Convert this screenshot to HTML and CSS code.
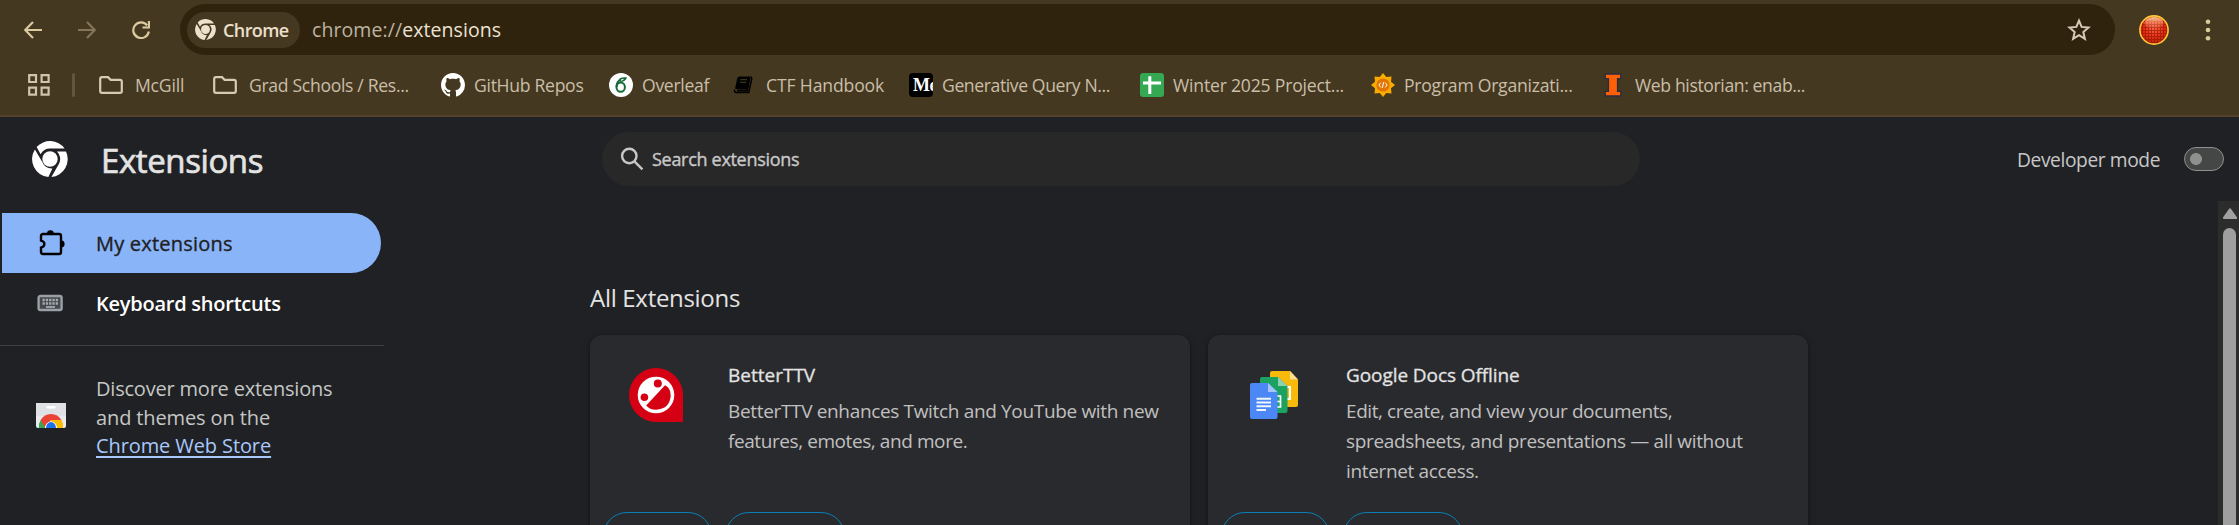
FILE: index.html
```html
<!DOCTYPE html>
<html lang="en">
<head>
<meta charset="utf-8">
<title>Extensions</title>
<link rel="stylesheet" href="styles.css">
</head>
<body>
<svg width="0" height="0" class="defs">
  <symbol id="chrome" viewBox="0 0 36 36">
    <circle cx="18" cy="18" r="7.7"/>
    <path d="M4.6 6A18 18 0 0 1 32.6 7.6H18A10.6 10.6 0 0 0 8.6 13.2Z"/>
    <path d="M2.9 8.4L10.3 21A9.6 9.6 0 0 0 20.4 27.4L16.4 36A18 18 0 0 1 2.9 8.4Z"/>
    <path d="M34 10.4A18 18 0 0 1 19.4 36L26.6 23.4A10.4 10.4 0 0 0 25 10.4Z"/>
  </symbol>
  <symbol id="folder" viewBox="0 0 24 18">
    <path d="M3 1.2H9L11.6 3.8H21Q22.8 3.8 22.8 5.6V15.2Q22.8 16.8 21 16.8H3Q1.2 16.8 1.2 15V3Q1.2 1.2 3 1.2Z" fill="none" stroke="#d6cbb4" stroke-width="2.2"/>
  </symbol>
</svg>

<header class="browser">
  <div class="toolbar">
    <svg class="nav" width="18" height="18" viewBox="0 0 18 18"><path d="M18 9H1.5M9 1L1.2 9L9 17"/></svg>
    <svg class="nav forward" width="18" height="18" viewBox="0 0 18 18"><path d="M0 9H16.5M9 1L16.8 9L9 17"/></svg>
    <svg class="nav reload" width="18" height="18" viewBox="0 0 18 18"><path d="M15.3 4.5A7.8 7.8 0 1 0 16.8 10.5M17 0V6.5H10.5"/></svg>
    <div class="omnibox">
      <div class="chip"><svg width="21" height="21"><use href="#chrome"/></svg><span class="t-chip">Chrome</span></div>
      <span class="url"><span class="scheme">chrome://</span>extensions</span>
      <svg class="star" width="24" height="24" viewBox="0 0 24 24"><path d="M12 2.6L14.6 8.9L21.5 9.5L16.3 14L17.9 20.8L12 17.2L6.1 20.8L7.7 14L2.5 9.5L9.4 8.9Z"/></svg>
    </div>
    <svg class="avatar" width="30" height="30" viewBox="0 0 30 30">
      <defs>
        <radialGradient id="ball" cx=".5" cy=".4" r=".6"><stop offset="0" stop-color="#ff6a4c"/><stop offset=".55" stop-color="#ec3216"/><stop offset="1" stop-color="#b82400"/></radialGradient>
        <linearGradient id="shine" x2="0" y2="1"><stop offset="0" stop-color="#ffdca0" stop-opacity=".9"/><stop offset="1" stop-color="#ff9070" stop-opacity="0"/></linearGradient>
        <pattern id="mesh" width="3" height="3" patternUnits="userSpaceOnUse"><path d="M0 .5H3M.5 0V3" stroke="#8a1200" stroke-width="1" opacity=".6"/></pattern>
      </defs>
      <circle cx="15" cy="15" r="14" fill="url(#ball)"/>
      <circle cx="15" cy="15" r="14" fill="url(#mesh)"/>
      <ellipse cx="15" cy="8" rx="9.5" ry="6" fill="url(#shine)"/>
      <circle cx="15" cy="15" r="14.1" fill="none" stroke="#ffc83c" stroke-width="1.6"/>
    </svg>
    <svg class="dots" width="6" height="24" viewBox="0 0 6 24"><circle cx="3" cy="3.7" r="2.3"/><circle cx="3" cy="12" r="2.3"/><circle cx="3" cy="20.3" r="2.3"/></svg>
  </div>
  <nav class="bookmarks">
    <svg class="apps" width="22" height="22" viewBox="0 0 22 22"><path d="M1.2 1.2H8V8H1.2ZM13.6 1.2H20.6V8H13.6ZM1.2 13.6H8V20.6H1.2ZM13.6 13.6H20.6V20.6H13.6Z"/></svg>
    <span class="sep"></span>
    <a class="bm b1"><svg width="24" height="18"><use href="#folder"/></svg><span>McGill</span></a>
    <a class="bm b2"><svg width="24" height="18"><use href="#folder"/></svg><span>Grad Schools / Res...</span></a>
    <a class="bm b3"><svg width="24" height="24" viewBox="0 0 16 16"><path fill="#fff" d="M8 0C3.58 0 0 3.58 0 8c0 3.54 2.29 6.53 5.47 7.59.4.07.55-.17.55-.38 0-.19-.01-.82-.01-1.49-2.01.37-2.53-.49-2.69-.94-.09-.23-.48-.94-.82-1.13-.28-.15-.68-.52-.01-.53.63-.01 1.08.58 1.23.82.72 1.21 1.87.87 2.33.66.07-.52.28-.87.51-1.07-1.78-.2-3.64-.89-3.64-3.95 0-.87.31-1.59.82-2.15-.08-.2-.36-1.02.08-2.12 0 0 .67-.21 2.2.82.64-.18 1.32-.27 2-.27s1.36.09 2 .27c1.53-1.04 2.2-.82 2.2-.82.44 1.1.16 1.92.08 2.12.51.56.82 1.27.82 2.15 0 3.07-1.87 3.75-3.65 3.95.29.25.54.73.54 1.48 0 1.07-.01 1.93-.01 2.2 0 .21.15.46.55.38A8.01 8.01 0 0 0 16 8c0-4.42-3.58-8-8-8z"/></svg><span>GitHub Repos</span></a>
    <a class="bm b4"><svg width="24" height="24" viewBox="0 0 24 24"><circle cx="12" cy="12" r="12" fill="#fff"/><g fill="none" stroke="#146b38"><ellipse cx="11.7" cy="14.2" rx="4.2" ry="4.6" stroke-width="2"/><path d="M7.5 14C7.5 10 9.3 7.6 12 6.6" stroke-width="2"/></g><path d="M9.5 7.8C10 4.5 14 4.2 18 4.4C17 8 13 9.3 10.5 8.8C12 8 14 7 15.5 5.8C13 6 10.8 6.8 9.5 7.8Z" fill="#146b38"/></svg><span>Overleaf</span></a>
    <a class="bm b5"><svg width="24" height="24" viewBox="0 0 24 24"><path d="M7.500 3.500H18L15 16H4.800Q3 16.500 3.200 15L5.300 5Q5.800 3.500 7.500 3.500Z"/><path d="M18.500 3.500L19.800 5.500L16.800 19.500H4.500Q2 19.500 2.500 16.500" fill="none" stroke="#000" stroke-width="1.500"/><path d="M17.500 5L15.200 17.500H5" fill="none" stroke="#000" stroke-width="1.800"/><path d="M8.500 6.700H15M8 9.300H14.300" stroke="#4a3f28" stroke-width="1"/></svg><span>CTF Handbook</span></a>
    <a class="bm b6"><svg width="24" height="24" viewBox="0 0 24 24"><rect width="24" height="24" rx="4"/><text x="4" y="18.3" fill="#fff" font-family="Liberation Serif, serif" font-weight="700" font-size="18" textLength="24">Me</text></svg><span>Generative Query N...</span></a>
    <a class="bm b7"><svg width="24" height="24" viewBox="0 0 24 24"><rect width="24" height="24" rx="3" fill="#34a853"/><path d="M9.8 3.2V21M3 10H21" stroke="#fff" stroke-width="3"/></svg><span>Winter 2025 Project...</span></a>
    <a class="bm b8"><svg width="24" height="24" viewBox="0 0 24 24"><path fill="#f9ab00" d="M12 0L15.3 4L20.5 3.5L20 8.700L24 12L20 15.300L20.5 20.5L15.300 20L12 24L8.700 20L3.5 20.5L4 15.300L0 12L4 8.700L3.5 3.5L8.700 4Z"/><circle cx="12" cy="12" r="6.600" fill="#e37400"/><path d="M9.8 9.600L7.8 12L9.8 14.400M14.2 9.600L16.2 12L14.2 14.400M12.8 9L11.2 15" fill="none" stroke="#fff" stroke-width="1"/></svg><span>Program Organizati...</span></a>
    <a class="bm b9"><svg width="18" height="24" viewBox="0 0 18 24"><path d="M1.2 1H16.8V5.6H13.6V18.4H16.8V23H1.2V18.4H4.4V5.6H1.2Z" fill="#ff5f05" stroke="#2b2c40" stroke-width="1.4"/></svg><span>Web historian: enab...</span></a>
  </nav>
</header>

<div class="page">
  <div class="head">
    <div class="brand"><svg width="36" height="36"><use href="#chrome"/></svg><h1>Extensions</h1></div>
    <div class="search"><svg width="24" height="24" viewBox="0 0 24 24"><circle cx="9.3" cy="9" r="7.2"/><path d="M14.4 14.4L22.4 22.4"/></svg><span>Search extensions</span></div>
    <div class="dev"><span>Developer mode</span><i class="toggle"></i></div>
  </div>
  <div class="body">
    <aside>
      <a class="item selected"><svg width="26" height="26" viewBox="0 0 26 26"><path d="M4 4H20Q22 4 22 6V22Q22 24 20 24H4Q2 24 2 22V17.6Q5.4 16.6 5.4 14Q5.4 11.4 2 10.6V6Q2 4 4 4Z" fill="none" stroke="#000" stroke-width="2.4"/><path d="M8 3.6A3.4 3.4 0 0 1 14.8 3.6ZM22.2 10.6A3.4 3.4 0 0 1 22.2 17.4Z"/></svg><span>My extensions</span></a>
      <a class="item"><svg width="26" height="18" viewBox="0 0 26 18"><rect x="1.6" y="2" width="23" height="14" rx="1.8" fill="#46494d" stroke="#9aa0a6" stroke-width="2.4"/><path d="M5.5 6H21M5.5 9.600H21" stroke="#a4a9ae" stroke-width="2.500" stroke-dasharray="2.300 1"/><path d="M9 13H18" stroke="#9aa0a6" stroke-width="2"/></svg><span class="kb">Keyboard shortcuts</span></a>
      <div class="promo">
        <svg width="30" height="26" viewBox="0 0 30 26"><path d="M0 0H30V23Q30 25 28 25H2Q0 25 0 23Z" fill="#e8eaed"/><path d="M0 0H30V13H0Z" fill="#dfe1e5"/><rect x="10.5" y="3" width="9" height="2.6" rx="1.3" fill="#fff"/><path d="M3 25A12 12 0 0 1 5 16.5L10 25Z" fill="#34a853"/><path d="M15 17H25.5A12 12 0 0 1 27 25H15Z" fill="#fbbc04"/><path d="M4.6 17A12 12 0 0 1 25.4 17H15L9.2 25Z" fill="#ea4335"/><path d="M9 25A6 6.500 0 0 1 21 25Z" fill="#fff"/><path d="M10 25A5 6 0 0 1 20 25Z" fill="#1a73e8"/></svg>
        <p><span class="p1">Discover more extensions</span><span class="p2">and themes on the</span><a class="p3">Chrome Web Store</a></p>
      </div>
    </aside>
    <main>
      <h2><span>All Extensions</span></h2>
      <div class="cards">
        <section class="card">
          <div class="info">
            <svg class="logo" width="54" height="54" viewBox="0 0 54 54"><path d="M27 0A27 27 0 0 1 54 27V54H27A27 27 0 0 1 27 0Z" fill="#d50014"/><circle cx="27" cy="27" r="18.3" fill="#fff"/><path d="M36 17.2Q42 20 41.7 28Q40.5 41 27 41.7Q20.5 41.5 17.2 37.4Z" fill="#d50014"/><circle cx="28.8" cy="15.6" r="4" fill="#d50014"/><circle cx="15.4" cy="29.2" r="3.8" fill="#d50014"/></svg>
            <div><h3 class="c1">BetterTTV</h3><p><span class="d1">BetterTTV enhances Twitch and YouTube with new</span><span class="d2">features, emotes, and more.</span></p></div>
          </div>
          <div class="buttons"><i></i><i></i></div>
        </section>
        <section class="card">
          <div class="info">
            <svg class="logo" width="54" height="54" viewBox="0 0 54 54">
              <path d="M25 3H43L51 11.5V37Q51 39 49 39H25Q23 39 23 37V5Q23 3 25 3Z" fill="#f7b90b"/><path d="M43 3L51 11.5H43Z" fill="#fde08f"/><rect x="35" y="19" width="8" height="12" fill="none" stroke="#fff" stroke-width="2"/>
              <path d="M15 9H31L40.500 18V43Q40.500 45 38.500 45H15Q13 45 13 43V11Q13 9 15 9Z" fill="#1ba260"/><path d="M31 9L40.500 18H31Z" fill="#8ed1b1"/><path d="M25 28H33.500V39H25M25 33.500H33.500" fill="none" stroke="#fff" stroke-width="1.700"/>
              <path d="M5 15H21L30.500 24V49Q30.500 51 28.500 51H5Q3 51 3 49V17Q3 15 5 15Z" fill="#4b87f5"/><path d="M21 15L30.500 24H21Z" fill="#a6c5fa"/><path d="M9.500 30.800H24M9.500 34.500H24M9.500 38.200H24M9.500 41.900H19" stroke="#f1f5fe" stroke-width="2"/></svg>
            <div><h3 class="c2">Google Docs Offline</h3><p><span class="e1">Edit, create, and view your documents,</span><span class="e2">spreadsheets, and presentations — all without</span><span class="e3">internet access.</span></p></div>
          </div>
          <div class="buttons"><i></i><i></i></div>
        </section>
      </div>
    </main>
    <div class="scroll"><svg width="16" height="12" viewBox="0 0 16 12"><path d="M8 1.500L14 10H2Z" fill="#a0a0a0" stroke="#a0a0a0" stroke-width="2.200" stroke-linejoin="round"/></svg><i></i></div>
  </div>
</div>
</body>
</html>
```
FILE: styles.css
```css
* { box-sizing: border-box; margin: 0; padding: 0; }
body {
  width: 2239px; height: 525px; overflow: hidden;
  display: flex; flex-direction: column;
  background: #202124; color: #e3e3e3;
  font-family: "Open Sans", "Noto Sans", sans-serif;
}
svg { display: block; flex: none; }
span, h1, h3, a { white-space: nowrap; }
.defs { position: absolute; }

.browser { height: 117px; background: #453820; border-bottom: 2px solid #514229; }
.toolbar { display: flex; align-items: center; height: 51px; margin-top: 4px; padding-left: 24px; }
.nav { fill: none; stroke: #dbc9a0; stroke-width: 2.2; margin-right: 36px; }
.nav.forward { stroke: #84765a; }
.nav.reload { margin-right: 30px; }
.omnibox { display: flex; align-items: center; width: 1935px; height: 51px; border-radius: 26px; background: #2f230e; padding: 0 24px 0 7px; }
.chip { display: flex; align-items: center; gap: 7px; width: 113px; height: 36px; padding-left: 8px; border-radius: 18px; background: #453820; color: #ede0cc; fill: #ede0cc; font-size: 18px; font-weight: 600; }
.t-chip { letter-spacing: -.6px; }
.url { margin-left: 12px; font-size: 19.5px; letter-spacing: .08px; color: #ede3d3; flex: 1; }
.scheme { color: #bdb3a0; }
.star { fill: none; stroke: #d6cbb8; stroke-width: 2; }
.avatar { margin-left: 24px; }
.dots { margin-left: 36px; fill: #dbc9a0; }

.bookmarks { display: flex; align-items: center; height: 60px; padding-left: 28px; font-size: 17.6px; color: #c9bea8; }
.apps { fill: none; stroke: #cfc4ad; stroke-width: 2.2; }
.sep { width: 3px; height: 24px; border-radius: 2px; background: #64563a; margin: 0 24px 0 22px; }
.bm { display: flex; align-items: center; gap: 9px; }
.b1 { width: 114px; gap: 12px; letter-spacing: -.2px; }
.b2 { width: 228px; gap: 12px; letter-spacing: -.32px; }
.b3 { width: 168px; letter-spacing: -.3px; }
.b4 { width: 123px; letter-spacing: -.3px; }
.b5 { width: 177px; gap: 10px; letter-spacing: -.15px; }
.b6 { width: 231px; letter-spacing: -.4px; }
.b7 { width: 231px; letter-spacing: -.2px; }
.b8 { width: 233px; letter-spacing: -.25px; }
.b9 { gap: 13px; letter-spacing: -.38px; }

.page { flex: 1; display: flex; flex-direction: column; border-bottom: 2px solid #241c25; }
.head { display: flex; align-items: center; height: 84px; }
.brand { width: 602px; display: flex; align-items: center; gap: 33px; padding-left: 32px; fill: #fff; }
h1 { font-size: 33px; font-weight: 400; line-height: 40px; padding-top: 3px; letter-spacing: -.4px; -webkit-text-stroke: .7px; }
.search { display: flex; align-items: center; gap: 8px; width: 1038px; height: 54px; border-radius: 27px; background: #282828; padding-left: 18px; font-size: 18px; letter-spacing: -.3px; color: #c7c7c7; -webkit-text-stroke: .4px; }
.search svg { fill: none; stroke: #c7c7c7; stroke-width: 2.4; }
.dev { display: flex; align-items: center; margin-left: auto; padding-right: 15px; font-size: 19.2px; letter-spacing: -.4px; color: #c7c7c7; }
.dev span { width: 168px; padding-left: 1px; }
.toggle { width: 40px; height: 24px; border: 1.5px solid #8f918f; border-radius: 12px; background: radial-gradient(circle at 11px 50%, #8f918f 5.6px, #444746 6.2px); }

.body { flex: 1; display: flex; min-height: 0; }
aside { width: 384px; padding-top: 12px; }
.item { display: flex; align-items: center; width: 379px; height: 60px; margin-left: 2px; padding-left: 37px; gap: 31px; font-size: 20px; color: #202124; }
.item + .item { color: #fff; font-weight: 600; padding-left: 35px; gap: 33px; letter-spacing: -.24px; }
.selected { background: #8ab4f8; border-radius: 0 30px 30px 0; letter-spacing: .22px; -webkit-text-stroke: .35px; }
.promo { display: flex; margin-top: 12px; padding: 29px 0 0 36px; gap: 30px; border-top: 1px solid #3c3d40; font-size: 20px; line-height: 28.5px; color: #c4c7c5; }
.promo svg { margin-top: 28px; }
p > * { display: block; width: max-content; }
.p1 { letter-spacing: -.2px; }
.p2 { letter-spacing: -.12px; }
.p3 { letter-spacing: -.1px; color: #a8c7fa; text-decoration: underline; text-decoration-thickness: 2px; text-underline-offset: 3px; }

main { padding: 80px 0 0 206px; }
h2 { font-size: 24px; font-weight: 400; line-height: 34px; height: 54px; letter-spacing: -.3px; }
.cards { display: flex; gap: 18px; }
.card { width: 600px; height: 210px; border-radius: 12px; background: #292a2d; box-shadow: 0 1px 3px #0005, 0 2px 9px #0003; }
.info { display: flex; gap: 45px; height: 177px; padding: 33px 0 0 39px; }
h3 { font-size: 19px; font-weight: 400; line-height: 24px; margin-top: -5px; height: 33px; -webkit-text-stroke: .3px; }
.c2 { letter-spacing: -.08px; }
.info p { font-size: 19px; line-height: 30px; letter-spacing: -.34px; color: #c0c0c0; }
.info .d2, .info .e1 { letter-spacing: -.42px; }
.buttons { display: flex; gap: 13px; height: 28px; padding-left: 13px; overflow: hidden; }
.buttons i { width: 109px; height: 48px; border: 1.5px solid #0b7fb5; border-radius: 24px; }
.buttons i + i { width: 120px; }
.scroll { margin-left: auto; width: 21px; background: #2c2c2c; padding: 7px 0 0 4px; display: flex; flex-direction: column; }
.scroll i { flex: 1; width: 13px; margin: 8px 0 0 1px; border-radius: 7px 7px 0 0; background: #9f9f9f; }
```
